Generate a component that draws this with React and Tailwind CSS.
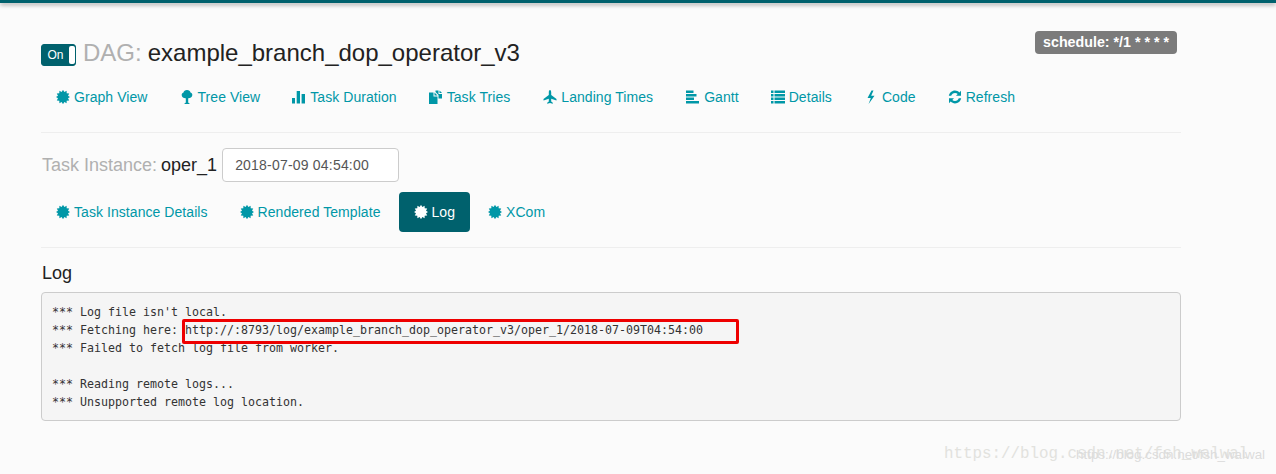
import React from "react";

const sans = "font-['Liberation_Sans',Arial,sans-serif]";
const mono = "font-['DejaVu_Sans_Mono','Liberation_Mono',monospace]";

const starPoints = Array.from({ length: 24 }, (_, i) => {
  const r = i % 2 === 0 ? 7.2 : 5.2;
  const a = (i * Math.PI) / 12;
  return `${(7 + r * Math.sin(a)).toFixed(2)},${(7 - r * Math.cos(a)).toFixed(2)}`;
}).join(" ");

function Svg({ children }) {
  return (
    <svg viewBox="0 0 14 14" width="14" height="14" fill="currentColor" className="shrink-0">
      {children}
    </svg>
  );
}

const Cert = () => <Svg><polygon points={starPoints} /></Svg>;
const Tree = () => (
  <Svg>
    <path d="M7 0C9 0 10.2 1.2 10.5 2.6C12 3 12.6 4.3 12.2 5.8C11.8 7.4 10.4 8.3 8.4 8.3L8.2 8.3L8.2 12.6L10 14L4 14L5.8 12.6L5.8 8.3L5.4 8.3C3.4 8.3 2.1 7.2 1.8 5.8C1.4 4.3 2.1 3 3.5 2.6C3.8 1.2 5 0 7 0Z" />
  </Svg>
);
const Stats = () => (
  <Svg>
    <rect x="0" y="8" width="3" height="5.5" />
    <rect x="4.7" y="1" width="3.3" height="12.5" />
    <rect x="9.6" y="4" width="3.4" height="9.5" />
  </Svg>
);
const Duplicate = () => (
  <Svg>
    <path d="M0 2.5H4.5V6.5H8.5V14H0Z" />
    <path d="M5.5 2.5L8.5 5.5H5.5Z" />
    <path d="M6.5 0.5H9.5V4H13V8.5H9.5V5L6.5 2Z" />
    <path d="M10.5 0.5L13 3H10.5Z" />
  </Svg>
);
const Plane = () => (
  <Svg>
    <path d="M7 0C7.8 0 8.2 1 8.2 2.5V5L13.5 9V10.6L8.2 8.8V11.4L9.8 12.7V13.8L7 13L4.2 13.8V12.7L5.8 11.4V8.8L0.5 10.6V9L5.8 5V2.5C5.8 1 6.2 0 7 0Z" />
  </Svg>
);
const AlignLeft = () => (
  <Svg>
    <rect x="0" y="0.5" width="7.5" height="2.5" />
    <rect x="0" y="4" width="10.5" height="2.5" />
    <rect x="0" y="7.5" width="8" height="2.5" />
    <rect x="0" y="11" width="13" height="2.5" />
  </Svg>
);
const ListIcon = () => (
  <Svg>
    {[0.5, 4, 7.5, 11].map((y) => (
      <g key={y}>
        <rect x="0" y={y} width="2.5" height="2.5" />
        <rect x="3.5" y={y} width="10.5" height="2.5" />
      </g>
    ))}
  </Svg>
);
const Flash = () => (
  <Svg>
    <path d="M7.5 0.5L3.5 8H6.8L4.6 14L10.5 5.8H7.2L9.5 0.5Z" />
  </Svg>
);
const Refresh = () => (
  <Svg>
    <path d="M7 0.6C8.7 0.6 10.2 1.3 11.3 2.4L13 0.8V5.8H8L9.7 4.1C9 3.4 8.1 3 7 3C5.2 3 3.7 4.2 3.2 5.8H0.8C1.4 2.9 3.9 0.6 7 0.6Z" />
    <path d="M7 13.4C5.3 13.4 3.8 12.7 2.7 11.6L1 13.2V8.2H6L4.3 9.9C5 10.6 5.9 11 7 11C8.8 11 10.3 9.8 10.8 8.2H13.2C12.6 11.1 10.1 13.4 7 13.4Z" />
  </Svg>
);

function NavItem({ icon: Icon, label, active = false, className = "ml-[2px]" }) {
  return (
    <a className={`flex h-10 items-center gap-[4px] rounded px-[15px] text-[14px] tracking-[0.06px] ${active ? "bg-[#00616d] text-white" : "text-[#0097a7]"} ${className}`}>
      <Icon />
      <span>{label}</span>
    </a>
  );
}

export default function App() {
  return (
    <div className={`relative h-[474px] w-[1276px] overflow-hidden bg-[#fbfbfb] ${sans} text-[#222]`}>
      <div className="h-[3px] bg-[#00616d] shadow-[0_2px_4px_rgba(0,0,0,0.35)]" />
      <div className="ml-[41px] w-[1140px]">
        <div className="flex h-[74px] justify-between pr-[4px] pt-[28px]">
          <div className="flex items-start pt-[13px]">
            <div className="flex h-[22px] w-[35px] items-stretch overflow-hidden rounded-[3px] border border-[#00616d] bg-[#00616d]">
              <span className="flex w-[27px] items-center justify-center text-[12px] text-white">On</span>
              <span className="my-[1px] flex-1 rounded-[2px] bg-white" />
            </div>
            <h1 className="ml-[7px] -mt-[1px] flex text-[24px] leading-[20px]">
              <span className="text-[#b0b0b0]">DAG:</span>
              <span className="ml-[6px] text-[#222]">example_branch_dop_operator_v3</span>
            </h1>
          </div>
          <span className="flex h-[23px] items-center rounded bg-[#7b7b7b] px-[8px] text-[14.25px] font-bold text-white">
            schedule: */1 * * * *
          </span>
        </div>
        <nav className="flex h-[40px] items-center">
          <NavItem icon={Cert} label="Graph View" className="" />
          <NavItem icon={Tree} label="Tree View" />
          <NavItem icon={Stats} label="Task Duration" />
          <NavItem icon={Duplicate} label="Task Tries" />
          <NavItem icon={Plane} label="Landing Times" className="ml-[3px]" />
          <NavItem icon={AlignLeft} label="Gantt" className="ml-[3px]" />
          <NavItem icon={ListIcon} label="Details" />
          <NavItem icon={Flash} label="Code" />
          <NavItem icon={Refresh} label="Refresh" />
        </nav>
        <div className="mt-[15px] h-px bg-[#eeeeee]" />
        <div className="mt-[15px] flex h-[34px] items-center text-[18px]">
          <span className="ml-[1px] text-[#b0b0b0]">Task Instance:</span>
          <span className="ml-[4px] text-[#222]">oper_1</span>
          <div className="ml-[5px] flex h-[34px] w-[177px] items-center rounded border border-[#cccccc] bg-white px-[12px] text-[14px] tracking-[0.2px] text-[#555]">
            2018-07-09 04:54:00
          </div>
        </div>
        <nav className="mt-[10px] flex h-[40px] items-center">
          <NavItem icon={Cert} label="Task Instance Details" className="" />
          <NavItem icon={Cert} label="Rendered Template" />
          <NavItem icon={Cert} label="Log" active className="ml-[3px]" />
          <NavItem icon={Cert} label="XCom" className="ml-[3px]" />
        </nav>
        <div className="mt-[15px] h-px bg-[#eeeeee]" />
        <h4 className="mt-[15px] pl-[1px] text-[18px] leading-[20px] text-[#222]">Log</h4>
        <pre className={`mt-[9px] h-[129px] rounded border border-[#cccccc] bg-[#f5f5f5] px-[10px] pt-[10px] ${mono} text-[11.63px] leading-[18px] text-[#333]`}>
          <code className={`block ${mono}`}>
            {"*** Log file isn't local.\n*** Fetching here: "}
            <span className="relative">
              http://:8793/log/example_branch_dop_operator_v3/oper_1/2018-07-09T04:54:00
              <span className="absolute left-[-3px] top-[-4px] h-[25px] w-[557px] rounded-[2px] border-[3px] border-[#ee0000]" />
            </span>
            {"\n*** Failed to fetch log file from worker.\n\n*** Reading remote logs...\n*** Unsupported remote log location."}
          </code>
        </pre>
      </div>
      <div className="absolute left-[944px] top-[444px] font-['Liberation_Mono',monospace] text-[15.85px] leading-[20px] text-[#e2e2de]">
        https://blog.csdn.net/fsh_walwal
      </div>
      <div className="absolute left-[1076px] top-[447px] font-['Liberation_Sans',sans-serif] text-[13.4px] leading-[16px] text-[#dcdcdc]">
        https://blog.csdn.net/fsh_walwal
      </div>
    </div>
  );
}
